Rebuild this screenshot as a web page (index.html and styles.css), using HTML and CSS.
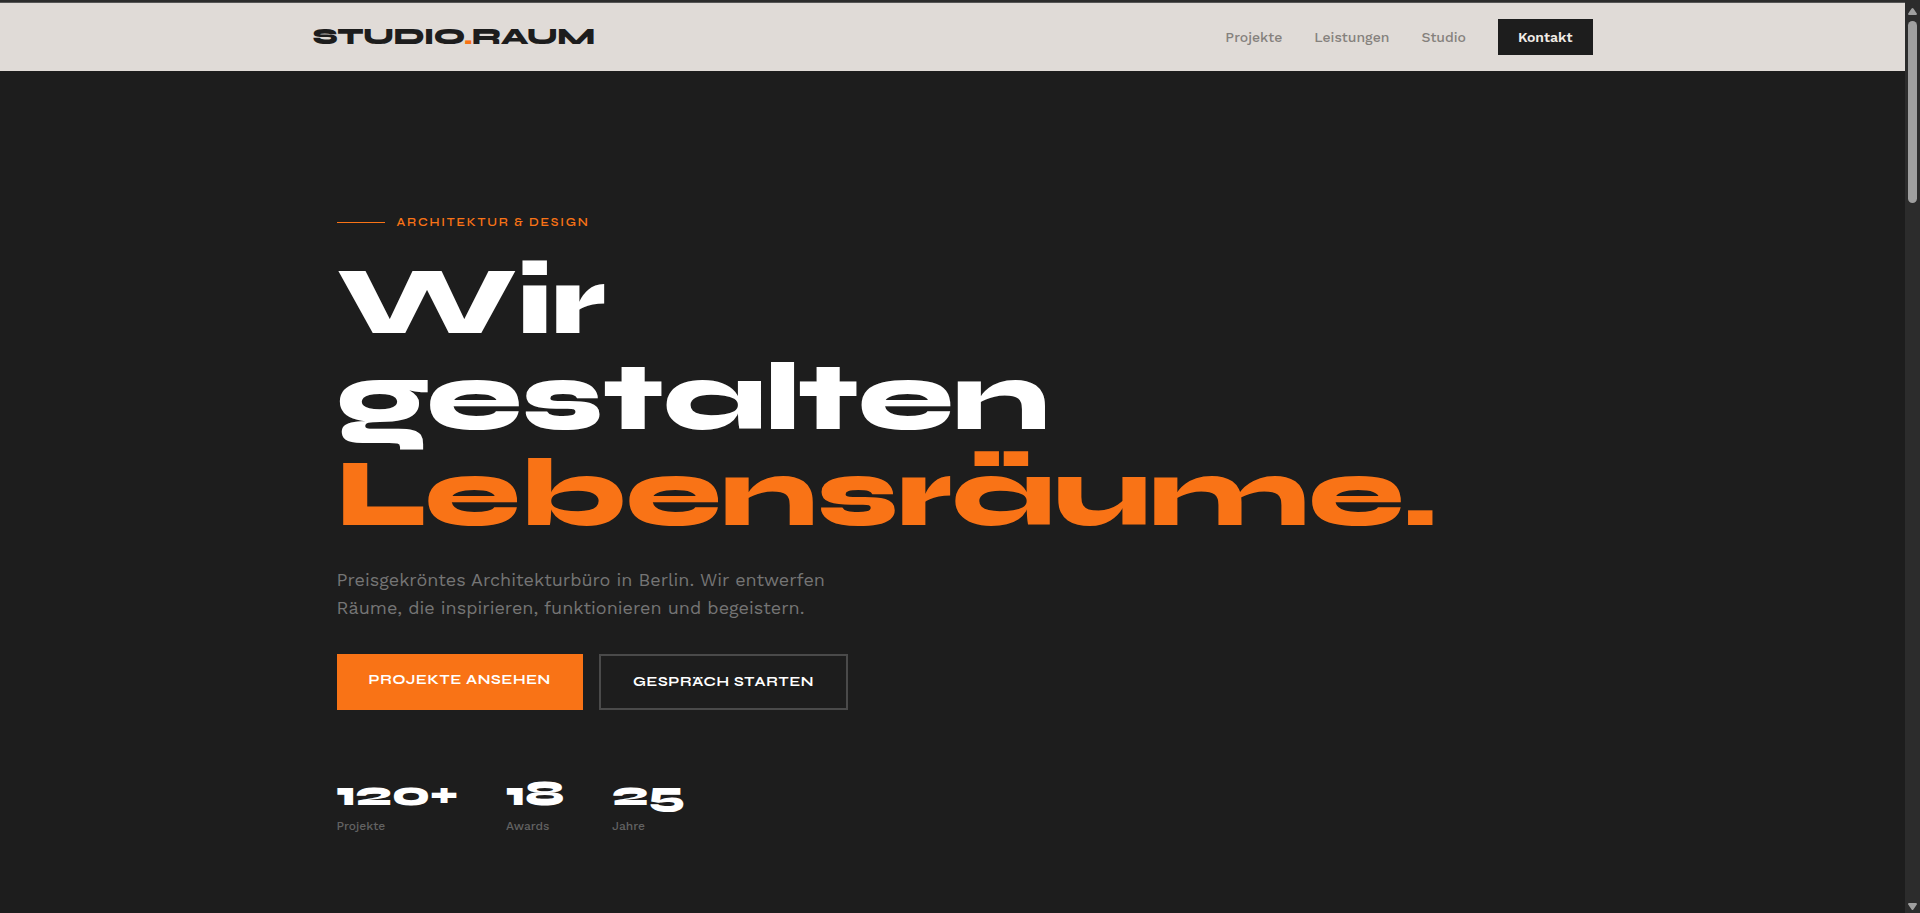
FILE: index.html
```
<!DOCTYPE html>
<html lang="de">
  <head>
    <meta charset="UTF-8" />
    <meta name="viewport" content="width=device-width, initial-scale=1.0" />
    <link rel="stylesheet" href="styles.css">

    <title>Studio.Raum</title>
  </head>
  <body>
    <div class="window">
      <div class="page">
        <header class="header">
          <div class="header-inner">
            <a href="#" class="logo">STUDIO<span class="accent">.</span>RAUM</a>
            <nav class="nav">
              <a href="#projekte">Projekte</a>
              <a href="#leistungen">Leistungen</a>
              <a href="#studio">Studio</a>
              <a href="#kontakt" class="nav-cta">Kontakt</a>
            </nav>
          </div>
        </header>

        <main class="hero">
          <div class="hero-inner">
            <p class="eyebrow">ARCHITEKTUR &amp; DESIGN</p>
            <h1 class="title">
              Wir<br />gestalten<br /><span class="accent">Lebensräume.</span>
            </h1>
            <p class="intro">
              Preisgekröntes Architekturbüro in Berlin. Wir entwerfen<br />
              Räume, die inspirieren, funktionieren und begeistern.
            </p>

            <div class="actions">
              <a href="#projekte" class="btn btn-primary">PROJEKTE ANSEHEN</a>
              <a href="#kontakt" class="btn btn-outline">GESPRÄCH STARTEN</a>
            </div>

            <div class="stats">
              <div>
                <div class="stat-number">120+</div>
                <div class="stat-label">Projekte</div>
              </div>
              <div>
                <div class="stat-number">18</div>
                <div class="stat-label">Awards</div>
              </div>
              <div>
                <div class="stat-number">25</div>
                <div class="stat-label">Jahre</div>
              </div>
            </div>
          </div>
        </main>
      </div>

      <div class="scrollbar" aria-hidden="true">
        <svg width="9" height="7" viewBox="0 0 9 7">
          <path d="M3.6 .6Q4.5-.4 5.4 .6L8.8 5.4Q9.2 7 8 7H1Q-.2 7 .2 5.4Z" fill="#9f9f9f" />
        </svg>
        <div class="scroll-thumb"></div>
        <svg class="scroll-down" width="9" height="7" viewBox="0 0 9 7">
          <path d="M3.6 6.4Q4.5 7.4 5.4 6.4L8.8 1.6Q9.2 0 8 0H1Q-.2 0 .2 1.6Z" fill="#9f9f9f" />
        </svg>
      </div>
    </div>
  </body>
</html>
```
FILE: styles.css
```
* {
  box-sizing: border-box;
}

body {
  margin: 0;
  background-color: #1d1d1d;
  color: white;
  font-family: "Work Sans", Inter, "Liberation Sans", sans-serif;
}

a {
  text-decoration: none;
  color: inherit;
}

.accent {
  color: #f97316;
}

.window {
  display: flex;
  height: 100vh;
  overflow: hidden;
  border-top: 2px solid #2c2c2c;
}

.page {
  flex: 1;
  border-top: 1px solid #565656;
}

/* header */
.header {
  background-color: #e0dbd7;
  color: #1d1d1d;
}

.header-inner {
  display: flex;
  justify-content: space-between;
  align-items: center;
  max-width: 1280px;
  height: 68px;
  margin: 0 auto;
}

.logo {
  font-family: Syne, "DejaVu Sans", sans-serif;
  font-size: 24px;
  font-weight: 800;
  line-height: 32px;
  letter-spacing: -0.025em;
}

.nav {
  display: flex;
  align-items: center;
  gap: 32px;
  font-size: 14px;
  font-weight: 500;
  line-height: 20px;
  color: #85817d;
}

.nav-cta {
  padding: 8px 20px;
  background-color: #1d1d1d;
  color: #f0ebe6;
  font-weight: 600;
}

/* hero */
.hero-inner {
  max-width: 1280px;
  margin: 0 auto;
  padding: 141px 24px 0;
}

.eyebrow {
  display: flex;
  align-items: center;
  gap: 12px;
  margin: 0 0 22px;
  font-family: Syne, "DejaVu Sans", sans-serif;
  font-size: 12px;
  font-weight: 600;
  line-height: 20px;
  letter-spacing: 0.15em;
  color: #f97316;
}

.eyebrow::before {
  content: "";
  width: 48px;
  height: 1px;
  background-color: #f97316;
}

.title {
  margin: 0 0 24px;
  font-family: Syne, "DejaVu Sans", sans-serif;
  font-size: 96px;
  font-weight: 800;
  line-height: 96px;
}

.intro {
  margin: 0 0 32px;
  font-size: 18px;
  line-height: 28px;
  color: #757575;
}

.actions {
  display: flex;
  gap: 16px;
  margin-bottom: 64px;
}

.btn {
  padding: 16px 32px;
  font-family: Syne, "DejaVu Sans", sans-serif;
  font-size: 14px;
  font-weight: 700;
  line-height: 20px;
  letter-spacing: 0.05em;
}

.btn-primary {
  background-color: #f97316;
}

.btn-outline {
  border: 2px solid #4a4a4a;
}

.stats {
  display: flex;
  gap: 48px;
}

.stat-number {
  font-family: Syne, "DejaVu Sans", sans-serif;
  font-size: 36px;
  font-weight: 800;
  line-height: 40px;
}

.stat-label {
  margin-top: 4px;
  font-size: 12px;
  font-weight: 500;
  line-height: 16px;
  color: #626262;
}

/* scrollbar */
.scrollbar {
  display: flex;
  flex-direction: column;
  align-items: center;
  width: 15px;
  padding: 6px 0 3px;
  background-color: #2c2c2c;
}

.scroll-thumb {
  width: 9px;
  height: 182px;
  margin-top: 6px;
  border-radius: 5px;
  background-color: #9f9f9f;
}

.scroll-down {
  margin-top: auto;
}
```
